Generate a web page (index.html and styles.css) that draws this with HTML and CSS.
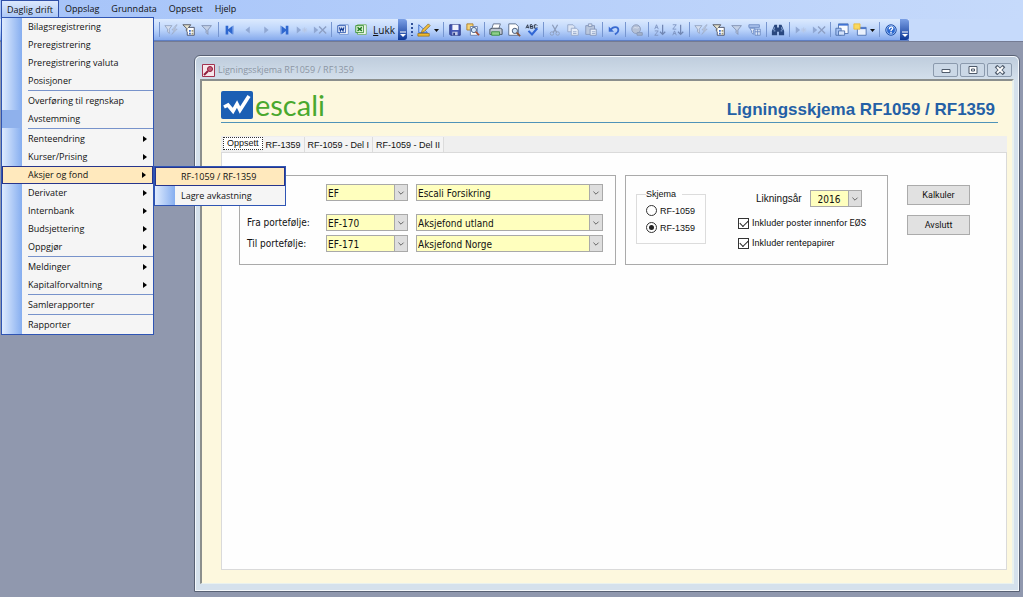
FILE: index.html
```
<!DOCTYPE html>
<html lang="no">
<head>
<meta charset="utf-8">
<title>Ligningsskjema RF1059 / RF1359</title>
<link rel="stylesheet" href="styles.css">
</head>
<body>
<svg class="defs" aria-hidden="true">
  <defs>
    <symbol id="funnel" viewBox="0 0 16 16"><path d="M2 3h11L9 8v5l-2-2V8z" fill="#c3d0e6" stroke="#7f8fb0"/></symbol>
    <symbol id="funnel-bolt" viewBox="0 0 16 16"><path d="M1 3h8L6 7v5L4 10V7z" fill="#d5deee" stroke="#94a3c0"/><path d="M14 2l-5 6h3l-3 5 6-6h-3l3-5z" fill="#c3cde0" stroke="#94a3c0" stroke-width=".6"/></symbol>
    <symbol id="funnel-form" viewBox="0 0 16 16"><path d="M1 2h9L7 6v5L5 9V6z" fill="#e7e4cf" stroke="#4c4f58"/><path d="M7 5h7v9H6v-4" fill="#fff" stroke="#454d63"/><path d="M8 8h2v2H8zM8 11h2v2H8z" fill="#3b6ccc"/><path d="M11 8h2v2h-2zM11 11h2v2h-2z" fill="#9f9a73"/></symbol>
    <symbol id="funnel-grid" viewBox="0 0 16 16"><path d="M1 2h12v3H1z" fill="#a9c1eb" stroke="#6d8ac2"/><path d="M2 6h6L6 9v4L4 11V9z" fill="#e3ebf7" stroke="#6d8ac2"/><path d="M8 7h6v7H8zM8 10h6M11 7v7" fill="#dce7f8" stroke="#6d8ac2"/></symbol>
    <symbol id="first" viewBox="0 0 16 16"><path d="M3 3h3v4l5-4v10L6 9v4H3z" fill="#2e67cf"/><path d="M12 3v10" stroke="#86a8e8"/></symbol>
    <symbol id="last" viewBox="0 0 16 16"><path d="M13 3h-3v4L5 3v10l5-4v4h3z" fill="#2e67cf"/><path d="M4 3v10" stroke="#86a8e8"/></symbol>
    <symbol id="prev" viewBox="0 0 16 16"><path d="M10 4v8L5 8z" fill="#91a8d3"/></symbol>
    <symbol id="next" viewBox="0 0 16 16"><path d="M6 4v8l5-4z" fill="#91a8d3"/></symbol>
    <symbol id="new-row" viewBox="0 0 16 16"><path d="M2 4v8l5-4z" fill="#91a8d3"/><path d="M11 5v6M8 8h6M9 6l4 4M13 6l-4 4" stroke="#b7c6e2"/></symbol>
    <symbol id="del-row" viewBox="0 0 16 16"><path d="M1 4v8l5-4z" fill="#91a8d3"/><path d="M7 4l8 8M15 4l-8 8" stroke="#8d9fc4" stroke-width="1.6"/></symbol>
    <symbol id="word" viewBox="0 0 16 16"><path d="M4 2h10v11H4z" fill="#fff" stroke="#6f92d2"/><path d="M2 3h9v8H2z" fill="#dfe9fb" stroke="#2a55ad"/><path d="M4 5l1 4 1.500-3L8 9l1-4" fill="none" stroke="#173f96" stroke-width="1.300"/></symbol>
    <symbol id="excel" viewBox="0 0 16 16"><path d="M4 2h10v11H4z" fill="#fff" stroke="#6fae62"/><path d="M2 3h9v8H2z" fill="#e0f4d8" stroke="#308c29"/><path d="M4 5l5 4M9 5L4 9" fill="none" stroke="#1d7a20" stroke-width="1.500"/></symbol>
    <symbol id="design" viewBox="0 0 16 16"><path d="M2 2v9h10z" fill="#b9d3fa" stroke="#3566c4"/><path d="M13 1l2 2-7 7-3 1 1-3z" fill="#f5c13d" stroke="#7a5b17" stroke-width=".8"/><path d="M1 12h13v3H1z" fill="#efb92d" stroke="#926b14" stroke-width=".8"/></symbol>
    <symbol id="save" viewBox="0 0 16 16"><path d="M2 2h12v12H3l-1-1z" fill="#4558b4" stroke="#26347f"/><path d="M5 2h7v6H5z" fill="#f1f3fc"/><path d="M5 10h6v4H5z" fill="#c1c8e5"/><path d="M6 11h2v3H6z" fill="#26347f"/></symbol>
    <symbol id="find-file" viewBox="0 0 16 16"><path d="M1 1h7v7H1z" fill="#f7d577" stroke="#a97b28"/><path d="M5 4h8v10H5z" fill="#fff" stroke="#627cad"/><circle cx="9" cy="8" r="3" fill="#d2e7fb" stroke="#39537e"/><path d="M11 10l4 4" stroke="#a84c2c" stroke-width="2"/></symbol>
    <symbol id="print" viewBox="0 0 16 16"><path d="M5 1h8l-2 6H3z" fill="#fff" stroke="#5e6c84"/><path d="M1 7l3-1h9l2 1v6H1z" fill="#bec7d2" stroke="#414b5a"/><path d="M3 10h9v4H3z" fill="#8fd08a" stroke="#398c3f"/></symbol>
    <symbol id="preview" viewBox="0 0 16 16"><path d="M2 1h8l3 3v10H2z" fill="#fff" stroke="#536785"/><circle cx="9" cy="9" r="3" fill="#cce2f8" stroke="#3b4d6b"/><path d="M11 11l4 4" stroke="#875132" stroke-width="2"/></symbol>
    <symbol id="spell" viewBox="0 0 16 16"><path d="M1 6l2-4 1 4M2 5h2M6 6V2h2l1 1-1 1H6h3v2H6M14 3l-1-1h-2v4h2l1-1" fill="none" stroke="#222b3c"/><path d="M4 9l4 4 6-7" fill="none" stroke="#3167d5" stroke-width="2.400"/></symbol>
    <symbol id="cut" viewBox="0 0 16 16"><path d="M5 2l5 9M11 2l-5 9" stroke="#8d9dbb" stroke-width="1.400"/><circle cx="4.500" cy="12" r="2" fill="none" stroke="#8d9dbb"/><circle cx="11" cy="12" r="2" fill="none" stroke="#8d9dbb"/></symbol>
    <symbol id="copy" viewBox="0 0 16 16"><path d="M2 2h6l2 2v6H2z" fill="#dce5f4" stroke="#94a6c8"/><path d="M6 6h6l2 2v6H6z" fill="#e6edf8" stroke="#94a6c8"/><path d="M8 10h4M8 12h4" stroke="#94a6c8"/></symbol>
    <symbol id="paste" viewBox="0 0 16 16"><path d="M2 3h10v10H2z" fill="#bac7dd" stroke="#8395b7"/><path d="M5 1h4v3H5z" fill="#dee5f0" stroke="#8395b7"/><path d="M7 7h7v7H7z" fill="#e6edf8" stroke="#8395b7"/><path d="M9 10h4M9 12h4" stroke="#94a6c8"/></symbol>
    <symbol id="undo" viewBox="0 0 16 16"><path d="M4 8c3-5 9-4 9 0 0 3-2 4-4 5" fill="none" stroke="#3a6bd1" stroke-width="2"/><path d="M2 4v6h6z" fill="#3a6bd1"/></symbol>
    <symbol id="globe" viewBox="0 0 16 16"><circle cx="7" cy="7" r="5" fill="#b5c1d6" stroke="#8d9cba"/><path d="M4 6c2-2 4 1 6-1" fill="none" stroke="#dfe6f2"/><path d="M8 11h6v3H8z" fill="#a5b3cd" stroke="#8797b5"/></symbol>
    <symbol id="sort-az" viewBox="0 0 16 16"><path d="M2 7l2-5 2 5M3 5h2M2 9h4l-4 5h4" fill="none" stroke="#7d92bf"/><path d="M11 2v11M8 10l3 3 3-3" fill="none" stroke="#7086b3" stroke-width="1.400"/></symbol>
    <symbol id="sort-za" viewBox="0 0 16 16"><path d="M2 2h4L2 7h4M2 14l2-5 2 5M3 12h2" fill="none" stroke="#7d92bf"/><path d="M11 2v11M8 10l3 3 3-3" fill="none" stroke="#7086b3" stroke-width="1.400"/></symbol>
    <symbol id="binoculars" viewBox="0 0 16 16"><path d="M4 2h3v3h2V2h3l3 7v5H9v-4H7v4H1V9z" fill="#29477f"/><path d="M3 9h2M11 9h2M4 5l-1 3M12 5l1 3" stroke="#a6c3f0"/></symbol>
    <symbol id="windows" viewBox="0 0 16 16"><path d="M4 1h11v11H4z" fill="#f7faff" stroke="#4d6fab"/><path d="M4 2h11" stroke="#3f72d4" stroke-width="2"/><path d="M1 6h6v8H1z" fill="#a3c1f4" stroke="#4d6fab"/><path d="M4 9h7v5H4z" fill="#d3e2fb" stroke="#4d6fab"/></symbol>
    <symbol id="new-object" viewBox="0 0 16 16"><path d="M5 5h10v9H5z" fill="#eaf1fd" stroke="#4c70b0"/><path d="M5 6h10" stroke="#4c78ce" stroke-width="2"/><path d="M1 1h7v6H1z" fill="#f9d960" stroke="#e9b93a"/></symbol>
    <symbol id="help" viewBox="0 0 16 16"><circle cx="8" cy="8" r="6" fill="#2c68cf" stroke="#1d4a9e"/><circle cx="8" cy="8" r="5" fill="none" stroke="#9bbdf4"/><path d="M6 7c0-3 4-3 4-1 0 1.500-2 1.500-2 3M8 10v2" fill="none" stroke="#fff" stroke-width="1.500"/></symbol>
    <symbol id="caret" viewBox="0 0 8 16"><path d="M1 7h5L3.500 10z" fill="#111"/></symbol>
    <symbol id="overflow" viewBox="0 0 8 16"><path d="M1 8h6" stroke="#fff"/><path d="M1 10h6l-3 3z" fill="#fff"/></symbol>
    <symbol id="chevron" viewBox="0 0 14 16"><path d="M4 7l3 3 3-3" fill="none" stroke="#505050"/></symbol>
  </defs>
</svg>

<nav class="menubar" aria-label="Hovedmeny">
  <div class="menu-root">
    <button class="menu-top menu-top-open" type="button">Daglig drift</button>
    <div class="menu">
      <button class="item" type="button">Bilagsregistrering</button>
      <button class="item" type="button">Preregistrering</button>
      <button class="item" type="button">Preregistrering valuta</button>
      <button class="item" type="button">Posisjoner</button>
      <hr class="rule">
      <button class="item" type="button">Overføring til regnskap</button>
      <button class="item item-pressed" type="button">Avstemming</button>
      <hr class="rule">
      <button class="item more" type="button">Renteendring</button>
      <button class="item more" type="button">Kurser/Prising</button>
      <div class="item-root">
        <button class="item more item-active" type="button">Aksjer og fond</button>
        <div class="menu submenu">
          <button class="item item-active" type="button">RF-1059 / RF-1359</button>
          <button class="item" type="button">Lagre avkastning</button>
        </div>
      </div>
      <button class="item more" type="button">Derivater</button>
      <button class="item more" type="button">Internbank</button>
      <button class="item more" type="button">Budsjettering</button>
      <button class="item more" type="button">Oppgjør</button>
      <hr class="rule">
      <button class="item more" type="button">Meldinger</button>
      <button class="item more" type="button">Kapitalforvaltning</button>
      <hr class="rule">
      <button class="item" type="button">Samlerapporter</button>
      <hr class="rule">
      <button class="item" type="button">Rapporter</button>
    </div>
  </div>
  <button class="menu-top" type="button">Oppslag</button>
  <button class="menu-top" type="button">Grunndata</button>
  <button class="menu-top" type="button">Oppsett</button>
  <button class="menu-top" type="button">Hjelp</button>
</nav>

<div class="toolbars">
  <div class="toolbar toolbar-main">
    <i class="sep"></i>
    <button class="tool" type="button" aria-label="Filtrer etter valg"><svg><use href="#funnel-bolt"/></svg></button>
    <button class="tool" type="button" aria-label="Filtrer etter skjema"><svg><use href="#funnel-form"/></svg></button>
    <button class="tool" type="button" aria-label="Bruk filter"><svg><use href="#funnel"/></svg></button>
    <i class="sep"></i>
    <button class="tool" type="button" aria-label="Første"><svg><use href="#first"/></svg></button>
    <button class="tool" type="button" aria-label="Forrige"><svg><use href="#prev"/></svg></button>
    <button class="tool" type="button" aria-label="Neste"><svg><use href="#next"/></svg></button>
    <button class="tool" type="button" aria-label="Siste"><svg><use href="#last"/></svg></button>
    <button class="tool" type="button" aria-label="Ny post"><svg><use href="#new-row"/></svg></button>
    <button class="tool" type="button" aria-label="Slett post"><svg><use href="#del-row"/></svg></button>
    <i class="sep"></i>
    <button class="tool" type="button" aria-label="Word"><svg><use href="#word"/></svg></button>
    <button class="tool" type="button" aria-label="Excel"><svg><use href="#excel"/></svg></button>
    <button class="tool-text" type="button"><u>L</u>ukk</button>
    <button class="cap" type="button" aria-label="Flere knapper"><svg><use href="#overflow"/></svg></button>
  </div>
  <div class="toolbar">
    <i class="grip"></i>
    <button class="tool" type="button" aria-label="Utforming"><svg><use href="#design"/></svg></button>
    <button class="drop" type="button" aria-label="Velg visning"><svg><use href="#caret"/></svg></button>
    <i class="sep"></i>
    <button class="tool" type="button" aria-label="Lagre"><svg><use href="#save"/></svg></button>
    <button class="tool" type="button" aria-label="Filsøk"><svg><use href="#find-file"/></svg></button>
    <i class="sep"></i>
    <button class="tool" type="button" aria-label="Skriv ut"><svg><use href="#print"/></svg></button>
    <button class="tool" type="button" aria-label="Forhåndsvis"><svg><use href="#preview"/></svg></button>
    <button class="tool" type="button" aria-label="Stavekontroll"><svg><use href="#spell"/></svg></button>
    <i class="sep"></i>
    <button class="tool" type="button" aria-label="Klipp ut"><svg><use href="#cut"/></svg></button>
    <button class="tool" type="button" aria-label="Kopier"><svg><use href="#copy"/></svg></button>
    <button class="tool" type="button" aria-label="Lim inn"><svg><use href="#paste"/></svg></button>
    <i class="sep"></i>
    <button class="tool" type="button" aria-label="Angre"><svg><use href="#undo"/></svg></button>
    <i class="sep"></i>
    <button class="tool" type="button" aria-label="Hyperkobling"><svg><use href="#globe"/></svg></button>
    <i class="sep"></i>
    <button class="tool" type="button" aria-label="Sorter stigende"><svg><use href="#sort-az"/></svg></button>
    <button class="tool" type="button" aria-label="Sorter synkende"><svg><use href="#sort-za"/></svg></button>
    <i class="sep"></i>
    <button class="tool" type="button" aria-label="Filtrer etter merking"><svg><use href="#funnel-bolt"/></svg></button>
    <button class="tool" type="button" aria-label="Skjemafilter"><svg><use href="#funnel-form"/></svg></button>
    <button class="tool" type="button" aria-label="Filter"><svg><use href="#funnel"/></svg></button>
    <button class="tool" type="button" aria-label="Avansert filter"><svg><use href="#funnel-grid"/></svg></button>
    <i class="sep"></i>
    <button class="tool" type="button" aria-label="Søk"><svg><use href="#binoculars"/></svg></button>
    <i class="sep"></i>
    <button class="tool" type="button" aria-label="Ny"><svg><use href="#new-row"/></svg></button>
    <button class="tool" type="button" aria-label="Slett"><svg><use href="#del-row"/></svg></button>
    <i class="sep"></i>
    <button class="tool" type="button" aria-label="Databasevindu"><svg><use href="#windows"/></svg></button>
    <button class="tool" type="button" aria-label="Nytt objekt"><svg><use href="#new-object"/></svg></button>
    <button class="drop" type="button" aria-label="Velg objekt"><svg><use href="#caret"/></svg></button>
    <i class="sep"></i>
    <button class="tool" type="button" aria-label="Hjelp"><svg><use href="#help"/></svg></button>
    <button class="cap" type="button" aria-label="Flere verktøy"><svg><use href="#overflow"/></svg></button>
  </div>
</div>

<main class="workspace">
  <section class="window">
    <header class="titlebar">
      <svg class="app-icon" viewBox="0 0 13 13"><path d="M.5.500h12v12H.5z" fill="#f7e6ea" stroke="#a3324f"/><circle cx="8" cy="5" r="2.500" fill="#c65c76" stroke="#8f1d3c"/><path d="M6 7l-4 4" stroke="#8f1d3c" stroke-width="2"/></svg>
      <span class="title">Ligningsskjema RF1059 / RF1359</span>
      <div class="win-buttons">
        <button class="win-button" type="button" aria-label="Minimer"><svg viewBox="0 0 12 10"><path d="M2 4.500h8v3H2z" fill="#fff" stroke="#4f5b6b"/></svg></button>
        <button class="win-button" type="button" aria-label="Maksimer"><svg viewBox="0 0 12 10"><path d="M2 1.500h8v7H2z" fill="#fff" stroke="#4f5b6b"/><path d="M4.500 4h3v2h-3z" fill="none" stroke="#4f5b6b"/></svg></button>
        <button class="win-button" type="button" aria-label="Lukk vindu"><svg viewBox="0 0 12 10"><path d="M2 1l8 8M10 1L2 9" stroke="#4f5b6b" stroke-width="3.600"/><path d="M3 2l6 6M9 2L3 8" stroke="#fff" stroke-width="1.800"/></svg></button>
      </div>
    </header>
    <div class="form">
      <div class="brand">
        <svg class="logo-mark" viewBox="0 0 32 28"><rect width="32" height="28" rx="2" fill="#1b5fb4"/><path d="M3 16l4-2 5 6 4-7 3 6 9-14" fill="none" stroke="#fff" stroke-width="3.600"/></svg>
        <span class="logo-text">escali</span>
        <h1 class="heading">Ligningsskjema RF1059 / RF1359</h1>
      </div>
      <div class="tabs">
        <div class="tab-strip" role="tablist">
          <button class="tab tab-current" type="button" role="tab" aria-selected="true">Oppsett</button>
          <button class="tab" type="button" role="tab">RF-1359</button>
          <button class="tab" type="button" role="tab">RF-1059 - Del I</button>
          <button class="tab" type="button" role="tab">RF-1059 - Del II</button>
        </div>
        <div class="pane">
          <div class="group portfolios">
            <span class="combo combo-first"><select aria-label="Selskapskode"><option>EF</option></select><svg><use href="#chevron"/></svg></span>
            <span class="combo"><select aria-label="Selskapsnavn"><option>Escali Forsikring</option></select><svg><use href="#chevron"/></svg></span>
            <label class="field-label label-spaced" for="from">Fra portefølje:</label>
            <span class="combo label-spaced"><select id="from"><option>EF-170</option></select><svg><use href="#chevron"/></svg></span>
            <span class="combo label-spaced"><select aria-label="Fra portefølje, navn"><option>Aksjefond utland</option></select><svg><use href="#chevron"/></svg></span>
            <label class="field-label" for="to">Til portefølje:</label>
            <span class="combo"><select id="to"><option>EF-171</option></select><svg><use href="#chevron"/></svg></span>
            <span class="combo"><select aria-label="Til portefølje, navn"><option>Aksjefond Norge</option></select><svg><use href="#chevron"/></svg></span>
          </div>
          <div class="group options">
            <fieldset class="schema">
              <legend>Skjema</legend>
              <label class="choice"><input type="radio" name="schema">RF-1059</label>
              <label class="choice"><input type="radio" name="schema" checked>RF-1359</label>
            </fieldset>
            <div class="choices">
              <div class="year">
                <label for="year">Likningsår</label>
                <span class="combo combo-year"><select id="year"><option>2016</option></select><svg><use href="#chevron"/></svg></span>
              </div>
              <label class="check"><input type="checkbox" checked>Inkluder poster innenfor EØS</label>
              <label class="check"><input type="checkbox" checked>Inkluder rentepapirer</label>
            </div>
          </div>
          <div class="actions">
            <button class="action" type="button">Kalkuler</button>
            <button class="action" type="button">Avslutt</button>
          </div>
        </div>
      </div>
    </div>
  </section>
</main>
</body>
</html>
```
FILE: styles.css
```
* { box-sizing: border-box; }

body {
  margin: 0;
  min-height: 100vh;
  display: flex;
  flex-direction: column;
  background: #9098ae;
  font-family: "Open Sans", "Noto Sans", sans-serif;
  font-size: 9px;
  color: #111;
}

button, select {
  font: inherit;
  color: inherit;
  margin: 0;
  padding: 0;
  border: 0;
  background: none;
}

.defs { position: absolute; width: 0; height: 0; }

/* Menu bar */
.menubar {
  display: flex;
  height: 19px;
  padding-left: 1px;
  background: linear-gradient(90deg, #a5c3f9, #c6dafb);
}
.menu-root, .item-root { position: relative; }
.menu-top {
  height: 18px;
  padding: 0 6px;
  line-height: 18px;
  white-space: nowrap;
}
.menu-top-open {
  padding: 0 5px;
  border: 1px solid #2f4fa8;
  border-bottom: 0;
  background: linear-gradient(#dce8fd, #aac6f6);
  line-height: 16px;
}
.menu {
  position: absolute;
  z-index: 2;
  top: 17px;
  left: 0;
  width: 153px;
  border: 1px solid #2f55b4;
  background: linear-gradient(90deg, #dfebfe, #86aef0 20px, #f5f5f5 20px);
}
.item {
  display: block;
  width: 100%;
  height: 18px;
  padding-left: 26px;
  line-height: 18px;
  text-align: left;
  white-space: nowrap;
}
.more {
  display: flex;
  align-items: center;
  justify-content: space-between;
  padding-right: 6px;
}
.more::after {
  content: "";
  border: 3px solid transparent;
  border-left: 4px solid #000;
  border-right: 0;
}
.item-active {
  border: 1px solid #27358c;
  background: #ffe9bd;
  padding-left: 25px;
  line-height: 16px;
}
.item-pressed { background: linear-gradient(90deg, #8fb1ec 20px, transparent 20px); }
.rule {
  height: 2px;
  margin: 0 0 0 26px;
  border: 0;
  border-top: 1px solid #7893cb;
}
.submenu { top: 0; left: 152px; width: 132px; }
.submenu .item { height: 19px; }

/* Toolbars */
.toolbars {
  display: flex;
  height: 22px;
  background: #c6dafb;
}
.toolbar {
  display: flex;
  align-items: center;
  background: linear-gradient(#dceafe, #bdd5fb 50%, #86aaec);
  border-bottom: 1px solid #5f7fc3;
}
.toolbar-main { padding-left: 157px; }
.tool, .drop { display: flex; flex: none; align-items: center; justify-content: center; width: 18px; height: 18px; }
.tool svg { width: 14px; height: 14px; }
.drop { width: 8px; }
.drop svg { width: 8px; height: 16px; }
.tool-text { width: 28px; font-size: 10px; text-align: center; line-height: 18px; }
.sep { width: 5px; height: 15px; border-left: 1px solid #7796d0; margin-left: 2px; margin-right: -2px; }
.cap {
  display: flex;
  align-items: flex-end;
  justify-content: center;
  width: 9px;
  align-self: stretch;
  border-radius: 0 3px 3px 0;
  background: linear-gradient(#7ba0e6, #0d3796);
}
.cap svg { width: 8px; height: 16px; }
.toolbar .grip {
  width: 2px;
  height: 13px;
  margin: 0 2px 0 4px;
  background: repeating-linear-gradient(#31519a 0 2px, transparent 2px 4px) 0 0 / 2px 100% no-repeat;
}

/* Document window */
.workspace {
  flex: 1;
  display: flex;
  padding: 13px 3px 5px 194px;
  border-top: 1px solid #747b93;
  background: #9098ae;
}
.window {
  flex: 1;
  display: flex;
  flex-direction: column;
  padding: 0 5px 7px;
  border: 1px solid #586174;
  border-radius: 6px 6px 0 0;
  background: #d5e1ec;
  box-shadow: inset 0 0 0 1px #f4f8fc;
}
.titlebar {
  display: flex;
  align-items: center;
  gap: 3px;
  height: 22px;
  margin: 1px -4px 0;
  padding: 4px 6px 0 6px;
  border-radius: 5px 5px 0 0;
  background: linear-gradient(#bfcddd, #d3dfeb);
  color: #8c96a4;
}
.app-icon { width: 13px; height: 13px; }
.title { flex: 1; line-height: 14px; }
.win-buttons { display: flex; gap: 2px; }
.win-button {
  display: flex;
  align-items: center;
  justify-content: center;
  width: 25px;
  height: 14px;
  border: 1px solid #8b9aad;
  border-radius: 2px;
  background: #cbd8e6;
}
.win-button svg { width: 12px; height: 10px; }

.form {
  flex: 1;
  display: flex;
  flex-direction: column;
  padding: 10px 5px 13px 19px;
  border: 2px solid #8b8f8d;
  border-right: 2px solid #eaf2ee;
  border-bottom: 1px solid #eaf2ee;
  background: #fdf8de;
}
.brand {
  display: flex;
  height: 32px;
  margin-right: 9px;
  border-bottom: 1px solid #4f93b8;
}
.logo-mark { width: 32px; height: 28px; }
.logo-text {
  margin-left: 2px;
  font-family: Lato, sans-serif;
  font-size: 29px;
  line-height: 28px;
  color: #4aa82e;
}
.heading {
  flex: 1;
  margin: 0 3px 0 0;
  padding-top: 8px;
  text-align: right;
  font: bold 17px/22px "Liberation Sans", sans-serif;
  color: #2460a6;
}
.tabs {
  flex: 1;
  display: flex;
  flex-direction: column;
  margin-top: 13px;
  background: #efefef;
  font-family: "Liberation Sans", sans-serif;
}
.tab-strip { display: flex; height: 16px; padding: 1px 0 0 2px; }
.tab {
  height: 15px;
  padding: 0 3px;
  border-right: 1px solid #dcdcdc;
  background: #f4f4f4;
  line-height: 16px;
}
.tab-current { height: 13px; border: 1px dotted #333; background: #fff; line-height: 11px; }
.pane {
  flex: 1;
  display: flex;
  align-items: flex-start;
  padding: 22px 17px;
  border: 1px solid #dadada;
  background: #fefefe;
}
.group { height: 90px; border: 1px solid #aaa; }
.portfolios {
  display: grid;
  grid-template-columns: 71px 82px 187px;
  column-gap: 8px;
  row-gap: 4px;
  align-content: start;
  width: 377px;
  padding: 8px 7px;
  font: 10px/17px "DejaVu Sans Condensed", "DejaVu Sans", sans-serif;
}
.combo-first { grid-column: 2; }
.label-spaced { margin-top: 9px; }
.combo { position: relative; display: block; height: 17px; }
.combo select {
  display: block;
  appearance: none;
  width: 100%;
  height: 17px;
  padding: 0 16px 0 1px;
  border: 1px solid #a9a9a9;
  border-radius: 0;
  background: #ffffbe;
}
.combo svg {
  position: absolute;
  top: 0;
  right: 0;
  width: 14px;
  height: 17px;
  border: 1px solid #a9a9a9;
  background: #dedede;
  pointer-events: none;
}
.options {
  display: flex;
  gap: 32px;
  width: 263px;
  margin-left: 9px;
  padding: 12px 10px;
}
.schema {
  display: flex;
  flex-direction: column;
  gap: 4px;
  width: 70px;
  height: 56px;
  margin: 0;
  padding: 4px 0 0 9px;
  border: 1px solid #dcdcdc;
}
.schema legend { padding: 0 6px 0 0; line-height: 12px; }
.choice, .check { display: flex; align-items: center; height: 13px; white-space: nowrap; }
.choice { gap: 3px; }
.check { gap: 3px; height: 20px; font: 9px/20px Roboto, sans-serif; }
.choice input, .check input {
  appearance: none;
  flex: none;
  display: grid;
  place-items: center;
  width: 11px;
  height: 11px;
  margin: 0;
  border: 1px solid #333;
  background: #fff;
}
.choice input { border-radius: 50%; }
.choice input:checked::before { content: ""; width: 5px; height: 5px; border-radius: 50%; background: #222; }
.check input:checked::before {
  content: "";
  width: 7px;
  height: 4px;
  margin-bottom: 2px;
  border: solid #222;
  border-width: 0 0 1px 1px;
  transform: rotate(-45deg);
}
.choices { display: flex; flex-direction: column; }
.year {
  display: flex;
  gap: 8px;
  margin: 2px 0 6px 18px;
  font: 10px/17px "DejaVu Sans Condensed", "DejaVu Sans", sans-serif;
}
.year label { font-family: "Liberation Sans", sans-serif; }
.combo-year { width: 52px; }
.combo-year select { padding-left: 7px; }
.actions { display: flex; flex-direction: column; gap: 10px; margin: 10px 0 0 19px; }
.action {
  width: 63px;
  height: 20px;
  border: 1px solid #ababab;
  background: #e1e1e1;
  font: 9px/18px Roboto, sans-serif;
}
```
